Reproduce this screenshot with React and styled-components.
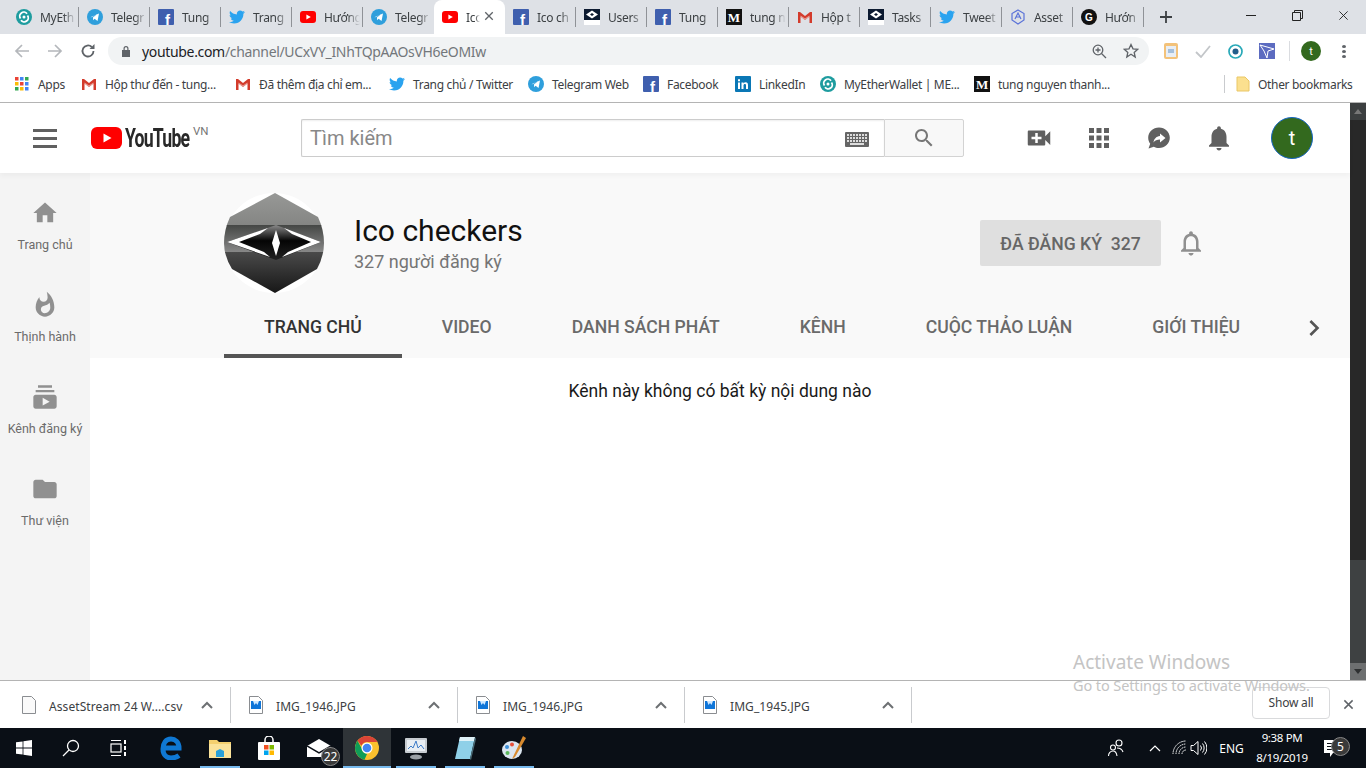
import React from 'react';
import styled, { createGlobalStyle } from 'styled-components';
import { FaTwitter } from 'react-icons/fa';

const GlobalStyle = createGlobalStyle`
  html, body {
    margin: 0;
    padding: 0;
    overflow: hidden;
    background: #fff;
  }
  * { box-sizing: border-box; }
`;

const Screen = styled.div`
  position: relative;
  width: 1366px;
  height: 768px;
  overflow: hidden;
  display: flex;
  flex-direction: column;
  font-family: Roboto, "Liberation Sans", sans-serif;
`;

/* chrome: tabs */
const TabStrip = styled.div`
  height: 34px;
  background: #dee1e6;
  display: flex;
  align-items: stretch;
  padding-left: 8px;
  flex: none;
`;

const Tab = styled.div`
  width: 71px;
  flex: none;
  display: flex;
  align-items: center;
  padding-left: 8px;
  gap: 8px;
  position: relative;
  background: ${(p) => (p.$active ? '#fff' : 'transparent')};
  border-radius: 8px 8px 0 0;
  &::after {
    content: '';
    display: ${(p) => (p.$sep ? 'block' : 'none')};
    position: absolute;
    right: 0;
    top: 7px;
    height: 20px;
    width: 1px;
    background: #8f9297;
  }
`;

const TabTitle = styled.span`
  font-family: "Noto Sans", sans-serif;
  font-size: 12px;
  letter-spacing: -0.3px;
  color: #3c4043;
  white-space: nowrap;
  width: ${(p) => (p.$active ? '14px' : '36px')};
  -webkit-mask-image: linear-gradient(90deg, #000 65%, transparent);
  mask-image: linear-gradient(90deg, #000 65%, transparent);
`;

const TabClose = styled.span`
  position: absolute;
  right: 9px;
  top: 11px;
  width: 12px;
  height: 12px;
  display: flex;
`;

const NewTab = styled.div`
  width: 30px;
  margin-left: 7px;
  display: flex;
  align-items: center;
  justify-content: center;
`;

const WindowControls = styled.div`
  margin-left: auto;
  display: flex;
  align-items: flex-start;
`;

const WinButton = styled.div`
  width: 46px;
  height: 30px;
  display: flex;
  align-items: center;
  justify-content: center;
`;

/* chrome: toolbar */
const Toolbar = styled.div`
  height: 34px;
  background: #fff;
  display: flex;
  align-items: center;
  padding: 0 0 0 12px;
  flex: none;
`;

const NavButton = styled.div`
  width: 20px;
  height: 20px;
  margin-right: 13px;
  display: flex;
  align-items: center;
  justify-content: center;
`;

const Omnibox = styled.div`
  width: 1041px;
  height: 28px;
  margin-left: -3px;
  border-radius: 14px;
  background: #f1f3f4;
  display: flex;
  align-items: center;
  padding: 0 2px 0 13px;
`;

const UrlText = styled.div`
  margin-left: 11px;
  font-family: "Noto Sans", sans-serif;
  font-size: 14px;
  letter-spacing: -0.33px;
  color: #73777b;
  flex: 1;
  white-space: nowrap;
  b {
    font-weight: 400;
    color: #202124;
  }
`;

const OmniAction = styled.div`
  width: 32px;
  display: flex;
  justify-content: center;
`;

const Extensions = styled.div`
  display: flex;
  align-items: center;
  margin-left: 6px;
  flex: 1;
`;

const ExtSlot = styled.div`
  width: 32px;
  display: flex;
  justify-content: center;
`;

const ExtDivider = styled.div`
  width: 1px;
  height: 20px;
  background: #dadce0;
  margin: 0 11px 0 6px;
`;

const ProfileDot = styled.div`
  width: 20px;
  height: 20px;
  border-radius: 50%;
  background: #33691e;
  color: #fff;
  font-size: 11px;
  display: flex;
  align-items: center;
  justify-content: center;
`;

const MoreDots = styled.div`
  margin-left: 21px;
  width: 4px;
  display: flex;
  flex-direction: column;
  gap: 2px;
  i {
    display: block;
    width: 4px;
    height: 3px;
    border-radius: 50%;
    background: #5f6368;
  }
`;

/* chrome: bookmarks */
const BookmarkBar = styled.div`
  height: 35px;
  background: #fff;
  border-bottom: 1px solid #b4b4b4;
  display: flex;
  align-items: center;
  padding: 0 0 2px 15px;
  flex: none;
`;

const Bookmark = styled.div`
  width: ${(p) => p.$w}px;
  flex: none;
  display: flex;
  align-items: center;
  gap: ${(p) => p.$gap || 8}px;
  font-family: "Noto Sans", sans-serif;
  font-size: 12px;
  letter-spacing: -0.32px;
  color: #3c4043;
  white-space: nowrap;
`;

const BookmarkDivider = styled.div`
  width: 1px;
  height: 18px;
  background: #c9cbce;
  margin: 0 10px 0 0;
`;

/* youtube page */
const Main = styled.div`
  flex: 1;
  display: flex;
  min-height: 0;
`;

const Page = styled.div`
  flex: 1;
  display: flex;
  flex-direction: column;
  min-width: 0;
`;

const YtHeader = styled.header`
  height: 70px;
  flex: none;
  background: #fff;
  display: flex;
  align-items: center;
  padding-left: 33px;
  position: relative;
  z-index: 2;
  box-shadow: 0 3px 5px rgba(0, 0, 0, 0.035);
`;

const Burger = styled.div`
  width: 24px;
  display: flex;
  flex-direction: column;
  gap: 5px;
  i {
    display: block;
    height: 3px;
    background: #606060;
  }
`;

const Logo = styled.div`
  margin-left: 34px;
  width: 210px;
  display: flex;
  align-items: center;
  position: relative;
`;

const Wordmark = styled.span`
  font-family: Roboto, sans-serif;
  font-weight: 700;
  font-size: 26px;
  letter-spacing: -1.2px;
  color: #282828;
  margin-left: 3px;
  display: inline-block;
  transform: scaleX(0.68);
  transform-origin: left center;
`;

const Country = styled.span`
  position: absolute;
  left: 102px;
  top: 1px;
  font-size: 11.5px;
  color: #767676;
`;

const SearchBox = styled.div`
  width: 583px;
  height: 38px;
  display: flex;
  align-items: center;
  background: #fff;
  border: 1px solid #ccc;
  border-right: none;
  border-radius: 2px 0 0 2px;
  padding: 2px 15px 0 8px;
  box-shadow: inset 0 1px 2px #eee;
`;

const SearchText = styled.span`
  flex: 1;
  margin-top: -2px;
  font-size: 20px;
  color: #888;
`;

const SearchButton = styled.div`
  width: 80px;
  height: 38px;
  background: #f8f8f8;
  border: 1px solid #d3d3d3;
  border-radius: 0 2px 2px 0;
  display: flex;
  align-items: center;
  justify-content: center;
`;

const HeaderIcons = styled.div`
  display: flex;
  align-items: center;
  gap: 30px;
  margin-left: 60px;
`;

const Avatar = styled.div`
  width: 42px;
  height: 42px;
  margin-left: 37px;
  border-radius: 50%;
  background: #33691e;
  border: 1px solid #1565c0;
  color: #fff;
  font-size: 20px;
  display: flex;
  align-items: center;
  justify-content: center;
`;

const Body = styled.div`
  flex: 1;
  display: flex;
  min-height: 0;
`;

const Sidebar = styled.nav`
  width: 90px;
  flex: none;
  background: #f4f4f4;
  padding-top: 26px;
`;

const SideItem = styled.div`
  height: 92px;
  display: flex;
  flex-direction: column;
  align-items: center;
  font-size: 12.5px;
  line-height: 16px;
  color: #6b6b6b;
  white-space: nowrap;
  span { margin-top: 10px; }
`;

const Content = styled.main`
  flex: 1;
  display: flex;
  flex-direction: column;
  background: #fff;
  min-width: 0;
`;

const ChannelHead = styled.section`
  background: #f9f9f9;
  height: 185px;
  flex: none;
  padding-left: 134px;
  display: flex;
  flex-direction: column;
`;

const ChannelRow = styled.div`
  height: 127px;
  display: flex;
  align-items: center;
  padding: 13px 144px 0 0;
`;

const ChannelInfo = styled.div`
  margin-left: 30px;
  margin-top: 2px;
  flex: 1;
`;

const ChannelName = styled.div`
  font-size: 30px;
  line-height: 36px;
  margin-top: -2px;
  color: #111;
`;

const ChannelSub = styled.div`
  font-size: 18px;
  line-height: 25px;
  color: #757575;
`;

const SubButton = styled.div`
  width: 181px;
  height: 46px;
  padding-top: 2px;
  background: #dfdfdf;
  border-radius: 2px;
  color: #666;
  font-size: 17.6px;
  font-weight: 500;
  display: flex;
  align-items: center;
  justify-content: center;
  white-space: pre;
`;

const BellSlot = styled.div`
  margin-left: 15px;
  display: flex;
`;

const ChannelTabs = styled.div`
  height: 58px;
  display: flex;
  padding-right: 20px;
`;

const ChannelTab = styled.div`
  padding: 0 40px 4px;
  display: flex;
  align-items: center;
  font-size: 17.6px;
  font-weight: 500;
  white-space: nowrap;
  color: ${(p) => (p.$active ? '#333' : '#6a6a6a')};
  box-shadow: ${(p) => (p.$active ? 'inset 0 -4px 0 #555' : 'none')};
`;

const TabsNext = styled.div`
  margin-left: auto;
  display: flex;
  align-items: center;
  padding-bottom: 3px;
`;

const EmptyNote = styled.div`
  text-align: center;
  margin-top: 22px;
  font-size: 17.5px;
  line-height: 22px;
  color: #1a1a1a;
`;

const Scrollbar = styled.div`
  width: 16px;
  flex: none;
  background: #3e4142;
  display: flex;
  flex-direction: column;
`;

const ScrollArrow = styled.div`
  height: 17px;
  background: ${(p) => (p.$down ? '#6d6f70' : '#3c3f40')};
  display: flex;
  align-items: center;
  justify-content: center;
  &::before {
    content: '';
    border-left: 4px solid transparent;
    border-right: 4px solid transparent;
    ${(p) => (p.$down ? 'border-top: 5px solid #2e3031;' : 'border-bottom: 5px solid #777;')}
  }
`;

const ScrollThumb = styled.div`
  height: 440px;
  background: #282828;
`;

const ScrollTrack = styled.div`
  flex: 1;
`;

/* chrome: download shelf */
const Shelf = styled.div`
  height: 48px;
  flex: none;
  background: #fff;
  border-top: 1px solid #b4b4b4;
  display: flex;
  align-items: center;
  padding-left: 4px;
`;

const Download = styled.div`
  width: 227px;
  height: 36px;
  flex: none;
  border-right: 1px solid #c9cbce;
  display: flex;
  align-items: center;
  padding-left: 18px;
  font-family: "Noto Sans", sans-serif;
  font-size: 12px;
  letter-spacing: 0.08px;
  color: #3c4043;
`;

const DownloadName = styled.span`
  margin-left: 13px;
  width: 152px;
  padding-top: 3px;
  white-space: nowrap;
`;

const ShowAll = styled.div`
  margin: -4px 0 0 auto;
  width: 78px;
  height: 32px;
  border: 1px solid #d9dadc;
  border-radius: 4px;
  font-family: "Noto Sans", sans-serif;
  font-size: 12px;
  letter-spacing: -0.2px;
  color: #3c4043;
  display: flex;
  align-items: center;
  justify-content: center;
`;

const ShelfClose = styled.div`
  width: 36px;
  display: flex;
  justify-content: center;
`;

/* windows taskbar */
const Taskbar = styled.footer`
  height: 40px;
  flex: none;
  background: #0a0f16;
  display: flex;
  align-items: stretch;
`;

const TaskIcon = styled.div`
  width: ${(p) => p.$w || 48}px;
  margin-right: ${(p) => p.$mr || 0}px;
  flex: none;
  position: relative;
  display: flex;
  align-items: center;
  justify-content: center;
  background: ${(p) => (p.$focus ? '#2f3438' : 'transparent')};
  box-shadow: ${(p) => (p.$open ? 'inset 0 -2px 0 #76b9ed' : 'none')};
`;

const TaskBadge = styled.span`
  position: absolute;
  right: ${(p) => p.$right}px;
  bottom: ${(p) => p.$bottom}px;
  width: 19px;
  height: 19px;
  border-radius: 50%;
  background: #3a3a3a;
  border: 1px solid #888;
  color: #fff;
  font-size: 12px;
  font-family: "Noto Sans", sans-serif;
  display: flex;
  align-items: center;
  justify-content: center;
`;

const Tray = styled.div`
  margin-left: auto;
  padding-right: 10px;
  display: flex;
  align-items: center;
  color: #fff;
  font-family: "Noto Sans", sans-serif;
  font-size: 12px;
`;

const TraySlot = styled.div`
  width: ${(p) => p.$w}px;
  display: flex;
  justify-content: center;
`;

const Clock = styled.div`
  width: 54px;
  display: flex;
  flex-direction: column;
  align-items: center;
  font-size: 11.5px;
  line-height: 20px;
  letter-spacing: -0.35px;
  white-space: nowrap;
`;

const ActivateNote = styled.div`
  position: absolute;
  left: 1073px;
  top: 650px;
  color: #c4c4c4;
  font-family: "Noto Sans", sans-serif;
  pointer-events: none;
  div:first-child {
    font-size: 19px;
    line-height: 24px;
  }
  div:last-child {
    font-size: 14.5px;
    letter-spacing: -0.1px;
    line-height: 20px;
    margin-top: 1px;
  }
`;

const Mew = ({ s = 16 }) => (
  <svg width={s} height={s} viewBox="0 0 16 16">
    <circle cx="8" cy="8" r="8" fill="#1e9c9f" />
    <path d="M4.5 9.5A4 4 0 0 1 11 4.8M11.5 6.5A4 4 0 0 1 5 11.2" fill="none" stroke="#fff" strokeWidth="1.8" />
    <circle cx="8" cy="8" r="1.5" fill="#fff" />
  </svg>
);

const Telegram = () => (
  <svg width="16" height="16" viewBox="0 0 24 24">
    <circle cx="12" cy="12" r="12" fill="#2f9fdc" />
    <path d="M5 12.2 18 6.8 15.8 18l-4.4-3.2-2 2-.5-4.2 6.4-5-7.6 4.4z" fill="#fff" />
  </svg>
);

const Facebook = () => (
  <svg width="16" height="16" viewBox="0 0 16 16">
    <rect width="16" height="16" rx="1" fill="#3f5fae" />
    <text x="7" y="16" fontFamily="Liberation Sans" fontWeight="700" fontSize="15" fill="#fff">f</text>
  </svg>
);

const Bird = () => <FaTwitter size={16} color="#2aa3ef" />;

const Youtube = () => (
  <svg width="16" height="16" viewBox="0 0 16 16">
    <rect y="2" width="16" height="12" rx="3" fill="#f00" />
    <path d="M6.4 5.4 10.8 8l-4.4 2.6z" fill="#fff" />
  </svg>
);

const Gmail = () => (
  <svg width="16" height="16" viewBox="0 0 16 16">
    <path d="M1 3h2l5 4 5-4h2v11h-2.5V7.5L8 11 3.5 7.5V14H1z" fill="#d33b2c" />
    <path d="M3.5 7.5 8 11l4.500-3.500V6.500L8 9.500 3.500 6.500z" fill="#e8a49c" />
  </svg>
);

const Tasks = () => (
  <svg width="16" height="16" viewBox="0 0 16 16">
    <rect width="16" height="11" fill="#0c1a30" />
    <rect y="11" width="16" height="5" fill="#fff" />
    <path d="M8 1.500 14 5.500 8 9.500 2 5.500z" fill="#fff" />
    <path d="M8 4 10 5.500 8 7 6 5.500z" fill="#0c1a30" />
  </svg>
);

const Medium = () => (
  <svg width="16" height="16" viewBox="0 0 16 16">
    <rect width="16" height="16" fill="#111" />
    <text x="8" y="12.500" textAnchor="middle" fontFamily="Liberation Serif" fontWeight="700" fontSize="13" fill="#fff">M</text>
  </svg>
);

const Asset = () => (
  <svg width="16" height="16" viewBox="0 0 16 16" fill="none" stroke="#5a72d8" strokeWidth="1.2">
    <path d="M8 1 14 4.500V11L8 15 2 11V4.500z" />
    <path d="M5 10 8 4l3 6M6 8h4" />
  </svg>
);

const Google = () => (
  <svg width="16" height="16" viewBox="0 0 16 16">
    <circle cx="8" cy="8" r="8" fill="#111" />
    <text x="8" y="11.500" textAnchor="middle" fontFamily="Liberation Sans" fontWeight="700" fontSize="10" fill="#fff">G</text>
  </svg>
);

const tabs = [
  [Mew, 'MyEth'],
  [Telegram, 'Telegr'],
  [Facebook, 'Tung'],
  [Bird, 'Trang'],
  [Youtube, 'Hướng'],
  [Telegram, 'Telegr'],
  [Youtube, 'Ico'],
  [Facebook, 'Ico ch'],
  [Tasks, 'Users'],
  [Facebook, 'Tung'],
  [Medium, 'tung n'],
  [Gmail, 'Hộp t'],
  [Tasks, 'Tasks'],
  [Bird, 'Tweet'],
  [Asset, 'Asset'],
  [Google, 'Hướn'],
];

const Apps = () => (
  <svg width="14" height="14" viewBox="0 0 14 14">
    {[0, 5, 10].map((y, r) =>
      [0, 5, 10].map((x, c) => (
        <rect
          key={`${r}${c}`}
          x={x}
          y={y}
          width="3.500"
          height="3.500"
          fill={['#ea4335', '#4285f4', '#34a853', '#fbbc05', '#ea4335', '#4285f4', '#34a853', '#fbbc05', '#4285f4'][r * 3 + c]}
        />
      ))
    )}
  </svg>
);

const LinkedIn = () => (
  <svg width="16" height="16" viewBox="0 0 16 16">
    <rect width="16" height="16" rx="1" fill="#0a77b5" />
    <path d="M3 6.500h2V13H3zM3 3.200h2v2H3zM6.500 6.500h2v1c.5-.8 1.200-1.200 2.200-1.200 1.600 0 2.300 1 2.300 2.800V13h-2V9.500c0-1-.3-1.500-1.100-1.500-.9 0-1.400.6-1.400 1.600V13h-2z" fill="#fff" />
  </svg>
);

const bookmarks = [
  [Apps, 'Apps', 66, 9],
  [Gmail, 'Hộp thư đến - tung...', 154],
  [Gmail, 'Đã thêm địa chỉ em...', 154],
  [Bird, 'Trang chủ / Twitter', 139],
  [Telegram, 'Telegram Web', 115],
  [Facebook, 'Facebook', 92],
  [LinkedIn, 'LinkedIn', 85],
  [Mew, 'MyEtherWallet | ME...', 154],
  [Medium, 'tung nguyen thanh...', 250],
];

const MaterialIcon = ({ d, size = 24, color = '#606060' }) => (
  <svg width={size} height={size} viewBox="0 0 24 24" fill={color}>
    <path d={d} />
  </svg>
);

const ICONS = {
  home: 'M10 20v-6h4v6h5v-8h3L12 3 2 12h3v8z',
  flame: 'M13.5.67s.74 2.65.74 4.8c0 2.06-1.35 3.73-3.41 3.73-2.07 0-3.63-1.67-3.63-3.73l.03-.36C5.21 7.51 4 10.62 4 14c0 4.42 3.58 8 8 8s8-3.58 8-8C20 8.61 17.41 3.8 13.5.67zM11.71 19c-1.78 0-3.22-1.4-3.22-3.14 0-1.62 1.05-2.76 2.81-3.12 1.77-.36 3.6-1.21 4.62-2.58.39 1.29.59 2.65.59 4.04 0 2.65-2.15 4.8-4.8 4.8z',
  subs: 'M20 8H4V6h16v2zm-2-6H6v2h12V2zm4 10v8c0 1.1-.9 2-2 2H4c-1.1 0-2-.9-2-2v-8c0-1.1.9-2 2-2h16c1.1 0 2 .9 2 2zm-6 4l-6-3.27v6.53L16 16z',
  folder: 'M10 4H4c-1.1 0-1.99.9-1.99 2L2 18c0 1.1.9 2 2 2h16c1.1 0 2-.9 2-2V8c0-1.1-.9-2-2-2h-8l-2-2z',
  video: 'M17 10.500V7c0-.55-.45-1-1-1H4c-.55 0-1 .45-1 1v10c0 .55.45 1 1 1h12c.55 0 1-.45 1-1v-3.500l4 4v-11l-4 4zM14 13h-3v3H9v-3H6v-2h3V8h2v3h3v2z',
  apps: 'M4 8h4V4H4v4zm6 12h4v-4h-4v4zm-6 0h4v-4H4v4zm0-6h4v-4H4v4zm6 0h4v-4h-4v4zm6-10v4h4V4h-4zm-6 4h4V4h-4v4zm6 6h4v-4h-4v4zm0 6h4v-4h-4v4z',
  bell: 'M12 22c1.100 0 2-.9 2-2h-4c0 1.100.89 2 2 2zm6-6v-5c0-3.070-1.640-5.640-4.500-6.320V4c0-.83-.67-1.500-1.500-1.500s-1.500.67-1.500 1.500v.68C7.630 5.360 6 7.920 6 11v5l-2 2v1h16v-1l-2-2z',
  bellOutline: 'M12 22c1.100 0 2-.9 2-2h-4c0 1.100.9 2 2 2zm6-6v-5c0-3.070-1.630-5.640-4.500-6.320V4c0-.83-.67-1.500-1.500-1.500s-1.500.67-1.500 1.500v.68C7.640 5.360 6 7.920 6 11v5l-2 2v1h16v-1l-2-2zm-2 1H8v-6c0-2.480 1.510-4.500 4-4.500s4 2.020 4 4.500v6z',
  search: 'M15.500 14h-.79l-.28-.27C15.410 12.590 16 11.110 16 9.500 16 5.910 13.090 3 9.500 3S3 5.910 3 9.500 5.910 16 9.500 16c1.610 0 3.090-.59 4.230-1.570l.27.28v.79l5 4.990L20.490 19l-4.990-5zm-6 0C7.010 14 5 11.990 5 9.500S7.010 5 9.500 5 14 7.010 14 9.500 11.990 14 9.500 14z',
  chevron: 'M10 6 8.590 7.410 13.170 12l-4.580 4.590L10 18l6-6z',
};

const ShareSlot = styled.div`
  width: 30px;
  display: flex;
  justify-content: center;
`;

const ShareIcon = () => (
  <ShareSlot>
    <svg width="24" height="24" viewBox="0 0 24 24">
      <path d="M12 1.500c6 0 10.800 4.500 10.800 10.300S18 22 12 22c-2 0-3.700-.4-5.200-1.300L1.500 22.500l1.700-4.700C2 16.200 1.200 14.100 1.200 11.800 1.200 6 6 1.500 12 1.500z" fill="#606060" />
      <path d="M13 7.500 18.500 12 13 16.500v-3c-3 0-5 .8-6.500 3 .5-3.500 2.500-6 6.500-6.500z" fill="#fff" />
    </svg>
  </ShareSlot>
);

const KeyboardIcon = () => (
  <svg width="24" height="15" viewBox="0 0 24 15">
    <rect width="24" height="15" rx="1" fill="#666" />
    {[2, 5, 8].map((y) =>
      [2, 5, 8, 11, 14, 17, 20].map((x) => <rect key={`${x}-${y}`} x={x} y={y} width="2" height="2" fill="#ddd" />)
    )}
    <rect x="5" y="11" width="14" height="2" fill="#ddd" />
  </svg>
);

const ChannelArt = () => (
  <svg width="100" height="102" viewBox="0 0 100 102">
    <defs>
      <linearGradient id="art-top" x1="0" y1="0" x2="0" y2="1">
        <stop offset="0" stopColor="#989997" />
        <stop offset="1" stopColor="#848583" />
      </linearGradient>
      <linearGradient id="art-mid" x1="0" y1="0" x2="0" y2="1">
        <stop offset="0" stopColor="#454745" />
        <stop offset="1" stopColor="#8a8a8a" />
      </linearGradient>
      <linearGradient id="art-low" x1="0" y1="0" x2="0" y2="1">
        <stop offset="0" stopColor="#4a4a4a" />
        <stop offset="1" stopColor="#161616" />
      </linearGradient>
      <linearGradient id="art-star" x1="0" y1="0" x2="0" y2="1">
        <stop offset="0" stopColor="#8a8a8a" />
        <stop offset="0.45" stopColor="#050505" />
        <stop offset="1" stopColor="#222" />
      </linearGradient>
      <clipPath id="art-hex">
        <path d="M51 1 94 25Q100 38 100 51T93 77L51 101 8 77Q0 64 0 51T6 25z" />
      </clipPath>
    </defs>
    <circle cx="50" cy="51" r="50" fill="#fff" />
    <g clipPath="url(#art-hex)">
      <rect width="100" height="34" fill="url(#art-top)" />
      <rect y="33" width="100" height="28" fill="url(#art-mid)" />
      <rect y="60" width="100" height="42" fill="url(#art-low)" />
    </g>
    <path d="M3 50 52 33 97 50 52 68z" fill="url(#art-star)" />
    <path d="M3 50 44 36 36 42 15 50z" fill="#fff" />
    <path d="M3 50H15L40 60 46 65z" fill="#fff" />
    <path d="M97 50 60 36 68 42 87 50z" fill="#fff" />
    <path d="M97 50H87L64 60 58 65z" fill="#fff" />
    <path d="M52 38 56 51 52 64 48 51z" fill="#fff" />
  </svg>
);

const DocIcon = ({ image }) => (
  <svg width="14" height="18" viewBox="0 0 14 18" fill={image ? '#fff' : '#fafafa'} stroke="#8a8d91">
    <path d="M.5.500h9l4 4v13H.500z" />
    {image && <rect x="2" y="5" width="10" height="8" fill="#0f75d8" stroke="none" />}
    {image && <path d="M4 5h6L8.500 9 7 7 5.500 9z" fill="#cfe8ff" stroke="none" />}
  </svg>
);

const Caret = () => (
  <svg width="12" height="8" viewBox="0 0 12 8" fill="none" stroke="#6d7073" strokeWidth="2">
    <path d="M1 7l5-5 5 5" />
  </svg>
);

const Cross = ({ size = 12, color = '#5f6368', width = 1.600 }) => (
  <svg width={size} height={size} viewBox="0 0 12 12" stroke={color} strokeWidth={width}>
    <path d="M1.500 1.500l9 9M10.500 1.500l-9 9" />
  </svg>
);

const downloads = [
  ['AssetStream 24 W....csv', false],
  ['IMG_1946.JPG', true],
  ['IMG_1946.JPG', true],
  ['IMG_1945.JPG', true],
];

const Windows = () => (
  <svg width="16" height="16" viewBox="0 0 16 16" fill="#fff">
    <path d="M0 2.300 6.600 1.400V7.600H0zM7.400 1.300 16 0v7.600H7.400zM0 8.400H6.600V14.600L0 13.700zM7.400 8.400H16V16L7.400 14.700z" />
  </svg>
);

const Magnifier = () => (
  <svg width="18" height="18" viewBox="0 0 18 18" fill="none" stroke="#fff" strokeWidth="1.300">
    <circle cx="11" cy="7" r="5.500" />
    <path d="M7 11 1 17" />
  </svg>
);

const TaskView = () => (
  <svg width="18" height="18" viewBox="0 0 18 18" fill="none" stroke="#fff" strokeWidth="1.200">
    <path d="M1 1.500h10M1 16.500h10" />
    <rect x="1" y="5" width="10" height="8" />
    <path d="M15 1v4M15 7v4M15 13v4" strokeWidth="2" />
  </svg>
);

const Edge = () => (
  <svg width="22" height="24" viewBox="0 0 22 24" fill="none" stroke="#0f78d4" strokeWidth="5">
    <path d="M3 12h16C19 6 15 3 11 3 6 3 3 7 3 13c0 6 4 9 8 9 3 0 6-1 8-2.500" />
  </svg>
);

const Explorer = () => (
  <svg width="22" height="20" viewBox="0 0 22 20">
    <path d="M0 2h8l2 2h12v16H0z" fill="#f4d06f" />
    <rect y="6" width="22" height="14" fill="#fbe39a" />
    <path d="M7 19v-6l4-2 4 2v6z" fill="#2aa0d8" />
  </svg>
);

const Store = () => (
  <svg width="22" height="24" viewBox="0 0 22 24">
    <path d="M7 7V4a4 4 0 0 1 8 0v3" fill="none" stroke="#fff" strokeWidth="1.500" />
    <rect y="6" width="22" height="18" rx="1" fill="#fff" />
    <rect x="6" y="9" width="4.500" height="4.500" fill="#f25022" />
    <rect x="11.500" y="9" width="4.500" height="4.500" fill="#7fba00" />
    <rect x="6" y="14.500" width="4.500" height="4.500" fill="#00a4ef" />
    <rect x="11.500" y="14.500" width="4.500" height="4.500" fill="#ffb900" />
  </svg>
);

const Mail = () => (
  <svg width="24" height="18" viewBox="0 0 24 18">
    <path d="M0 7 12 0l12 7v11H0z" fill="#fff" />
    <path d="M0 7l12 7 12-7" fill="none" stroke="#0a0f16" strokeWidth="1.500" />
  </svg>
);

const Chrome = () => (
  <svg width="24" height="24" viewBox="0 0 24 24">
    <circle cx="12" cy="12" r="12" fill="#fbc02d" />
    <path d="M12 0a12 12 0 0 1 10.400 6H12a6 6 0 0 0-5.600 3.800L2.500 4.700A12 12 0 0 1 12 0z" fill="#db4437" />
    <path d="M2.500 4.700 7 13a6 6 0 0 0 5 4.900L9.500 23.700A12 12 0 0 1 2.500 4.700z" fill="#0f9d58" />
    <circle cx="12" cy="12" r="5.500" fill="#fff" />
    <circle cx="12" cy="12" r="4.300" fill="#4285f4" />
  </svg>
);

const Monitor = () => (
  <svg width="24" height="24" viewBox="0 0 24 24">
    <rect x="1" y="2" width="22" height="15" rx="1" fill="#c7ccd1" />
    <rect x="3" y="4" width="18" height="11" fill="#e9eef3" />
    <path d="M4 13 7 10 9 12 12 5 14 12 17 9 20 13" fill="none" stroke="#3d7cc9" />
    <ellipse cx="12" cy="21" rx="6" ry="2.500" fill="#9aa0a6" />
  </svg>
);

const Notepad = () => (
  <svg width="22" height="24" viewBox="0 0 22 24">
    <path d="M6 1h15L16 23H1z" fill="#8fd0e8" />
    <path d="M6 1h15l-1 4H5z" fill="#dff2f8" />
    <path d="M16 23l5-22 1 2-5 21z" fill="#4c6d78" />
  </svg>
);

const Paint = () => (
  <svg width="26" height="26" viewBox="0 0 26 26">
    <ellipse cx="11" cy="15" rx="10" ry="9" fill="#dce6f0" />
    <circle cx="6" cy="12" r="2" fill="#3d8fd8" />
    <circle cx="11" cy="9.500" r="2" fill="#e8503a" />
    <circle cx="6.500" cy="18" r="2" fill="#5cb85c" />
    <path d="M22 1 25 3 14 22 11 24z" fill="#d88a2e" />
  </svg>
);

const Person = () => (
  <svg width="18" height="18" viewBox="0 0 18 18" fill="none" stroke="#fff" strokeWidth="1.100">
    <circle cx="12" cy="4" r="3" />
    <circle cx="6" cy="8.500" r="2.500" />
    <path d="M1.500 17c0-3 2-5 4.500-5s3.500 1.500 4 5M10 9c3 0 5 1 6 4" />
  </svg>
);

const Wifi = () => (
  <svg width="16" height="16" viewBox="0 0 16 16" fill="none" stroke="#fff" strokeWidth="1" strokeDasharray="1.500 .7">
    <path d="M1 14A13 13 0 0 1 14 1M4 14A10 10 0 0 1 14 4M7 14a7 7 0 0 1 7-7M10 14a4 4 0 0 1 4-4" />
  </svg>
);

const Speaker = () => (
  <svg width="17" height="16" viewBox="0 0 17 16" fill="none" stroke="#fff" strokeWidth="1">
    <path d="M1 5.500h2.500L8 1.500v13l-4.500-4H1z" />
    <path d="M10.500 5.500a4 4 0 0 1 0 5M12.500 3.500a7 7 0 0 1 0 9M14.500 1.500a10 10 0 0 1 0 13" />
  </svg>
);

const Notice = () => (
  <svg width="18" height="17" viewBox="0 0 18 17" fill="#fff">
    <path d="M0 0h18v13H9l-3 4v-4H0z" />
    <path d="M3 3.500h12M3 6.500h12M3 9.500h9" stroke="#0a0f16" strokeWidth="1" />
  </svg>
);

const sideItems = [
  [ICONS.home, 'Trang chủ'],
  [ICONS.flame, 'Thịnh hành'],
  [ICONS.subs, 'Kênh đăng ký'],
  [ICONS.folder, 'Thư viện'],
];

const channelTabs = ['TRANG CHỦ', 'VIDEO', 'DANH SÁCH PHÁT', 'KÊNH', 'CUỘC THẢO LUẬN', 'GIỚI THIỆU'];

export default function App() {
  return (
    <Screen>
      <GlobalStyle />
      <TabStrip>
        {tabs.map(([Icon, title], idx) => (
          <Tab key={idx} $active={idx === 6} $sep={idx !== 5 && idx !== 6}>
            <Icon />
            <TabTitle $active={idx === 6}>{title}</TabTitle>
            {idx === 6 && (
              <TabClose>
                <Cross size={10} />
              </TabClose>
            )}
          </Tab>
        ))}
        <NewTab>
          <svg width="12" height="12" viewBox="0 0 12 12" stroke="#3c4043" strokeWidth="1.800">
            <path d="M6 0v12M0 6h12" />
          </svg>
        </NewTab>
        <WindowControls>
          <WinButton>
            <svg width="10" height="10" viewBox="0 0 10 10" stroke="#222">
              <path d="M0 5.500h10" />
            </svg>
          </WinButton>
          <WinButton>
            <svg width="11" height="11" viewBox="0 0 11 11" fill="none" stroke="#222">
              <path d="M.5 2.500h8v8h-8zM2.500 2.500v-2h8v8h-2" />
            </svg>
          </WinButton>
          <WinButton>
            <Cross size={11} color="#222" width={1} />
          </WinButton>
        </WindowControls>
      </TabStrip>

      <Toolbar>
        <NavButton>
          <svg width="16" height="16" viewBox="0 0 16 16" fill="none" stroke="#b4b7bb" strokeWidth="1.700">
            <path d="M15 8H2M8 2 2 8l6 6" />
          </svg>
        </NavButton>
        <NavButton>
          <svg width="16" height="16" viewBox="0 0 16 16" fill="none" stroke="#b4b7bb" strokeWidth="1.700">
            <path d="M1 8h13M8 2l6 6-6 6" />
          </svg>
        </NavButton>
        <NavButton>
          <svg width="16" height="16" viewBox="0 0 16 16" fill="none" stroke="#5f6368" strokeWidth="1.800">
            <path d="M13.500 8A5.500 5.500 0 1 1 11.800 4" />
            <path d="M14.500 1v5h-5z" fill="#5f6368" stroke="none" />
          </svg>
        </NavButton>
        <Omnibox>
          <svg width="10" height="12" viewBox="0 0 10 12" fill="#5f6368">
            <path d="M1 5h8v7H1zM2.500 5V3.500a2.500 2.500 0 0 1 5 0V5H6.300V3.500a1.300 1.300 0 0 0-2.600 0V5z" />
          </svg>
          <UrlText>
            <b>youtube.com</b>/channel/UCxVY_INhTQpAAOsVH6eOMIw
          </UrlText>
          <OmniAction>
            <svg width="15" height="15" viewBox="0 0 15 15" fill="none" stroke="#5f6368" strokeWidth="1.300">
              <circle cx="6" cy="6" r="4.800" />
              <path d="M9.500 9.500 14 14M6 3.500v5M3.500 6h5" />
            </svg>
          </OmniAction>
          <OmniAction>
            <svg width="16" height="16" viewBox="0 0 16 16" fill="none" stroke="#5f6368" strokeWidth="1.300">
              <path d="M8 1.500l2 4.300 4.700.5-3.500 3.100 1 4.600L8 11.200l-4.200 2.800 1-4.600L1.300 6.300 6 5.800z" />
            </svg>
          </OmniAction>
        </Omnibox>
        <Extensions>
          <ExtSlot>
            <svg width="14" height="16" viewBox="0 0 14 16">
              <rect width="14" height="16" rx="2" fill="#f3c27a" />
              <rect x="2" y="3" width="10" height="11" fill="#e8eef5" />
              <rect x="4" y="6" width="6" height="4" fill="#a4bfdc" />
            </svg>
          </ExtSlot>
          <ExtSlot>
            <svg width="16" height="13" viewBox="0 0 16 13" fill="none" stroke="#c3c6c9" strokeWidth="1.800">
              <path d="M1 7l5 5L15 1" />
            </svg>
          </ExtSlot>
          <ExtSlot>
            <svg width="15" height="15" viewBox="0 0 15 15">
              <circle cx="7.500" cy="7.500" r="6.500" fill="none" stroke="#29a9b8" strokeWidth="1.700" />
              <circle cx="7.500" cy="7.500" r="3" fill="#235e8a" />
            </svg>
          </ExtSlot>
          <ExtSlot>
            <svg width="16" height="16" viewBox="0 0 16 16">
              <rect width="16" height="16" fill="#5c6bc0" />
              <path d="M1 2 15 6 9 8 8 15 5 8z" fill="none" stroke="#fff" />
            </svg>
          </ExtSlot>
          <ExtDivider />
          <ProfileDot>t</ProfileDot>
          <MoreDots>
            <i />
            <i />
            <i />
          </MoreDots>
        </Extensions>
      </Toolbar>

      <BookmarkBar>
        {bookmarks.map(([Icon, label, w, gap]) => (
          <Bookmark key={label} $w={w} $gap={gap}>
            <Icon />
            {label}
          </Bookmark>
        ))}
        <BookmarkDivider />
        <Bookmark $w={130} $gap={7}>
          <svg width="16" height="16" viewBox="0 0 16 16">
            <path d="M2 1h8l4 4v10H2z" fill="#fbe08f" stroke="#eac767" />
          </svg>
          Other bookmarks
        </Bookmark>
      </BookmarkBar>

      <Main>
        <Page>
          <YtHeader>
            <Burger>
              <i />
              <i />
              <i />
            </Burger>
            <Logo>
              <svg width="31" height="22" viewBox="0 0 31 22">
                <rect width="31" height="22" rx="6" fill="#f00" />
                <path d="M12.500 6.500 20.500 11l-8 4.500z" fill="#fff" />
              </svg>
              <Wordmark>YouTube</Wordmark>
              <Country>VN</Country>
            </Logo>
            <SearchBox>
              <SearchText>Tìm kiếm</SearchText>
              <KeyboardIcon />
            </SearchBox>
            <SearchButton>
              <MaterialIcon d={ICONS.search} color="#777" />
            </SearchButton>
            <HeaderIcons>
              <MaterialIcon d={ICONS.video} size={30} />
              <MaterialIcon d={ICONS.apps} size={30} />
              <ShareIcon />
              <MaterialIcon d={ICONS.bell} size={30} />
            </HeaderIcons>
            <Avatar>t</Avatar>
          </YtHeader>

          <Body>
            <Sidebar>
              {sideItems.map(([d, label]) => (
                <SideItem key={label}>
                  <MaterialIcon d={d} size={28} color="#909090" />
                  <span>{label}</span>
                </SideItem>
              ))}
            </Sidebar>
            <Content>
              <ChannelHead>
                <ChannelRow>
                  <ChannelArt />
                  <ChannelInfo>
                    <ChannelName>Ico checkers</ChannelName>
                    <ChannelSub>327 người đăng ký</ChannelSub>
                  </ChannelInfo>
                  <SubButton>ĐÃ ĐĂNG KÝ  327</SubButton>
                  <BellSlot>
                    <MaterialIcon d={ICONS.bellOutline} size={30} color="#909090" />
                  </BellSlot>
                </ChannelRow>
                <ChannelTabs>
                  {channelTabs.map((label, idx) => (
                    <ChannelTab key={label} $active={idx === 0}>
                      {label}
                    </ChannelTab>
                  ))}
                  <TabsNext>
                    <MaterialIcon d={ICONS.chevron} size={32} color="#555" />
                  </TabsNext>
                </ChannelTabs>
              </ChannelHead>
              <EmptyNote>Kênh này không có bất kỳ nội dung nào</EmptyNote>
            </Content>
          </Body>
        </Page>
        <Scrollbar>
          <ScrollArrow />
          <ScrollThumb />
          <ScrollTrack />
          <ScrollArrow $down />
        </Scrollbar>
      </Main>

      <Shelf>
        {downloads.map(([name, image], idx) => (
          <Download key={idx}>
            <DocIcon image={image} />
            <DownloadName>{name}</DownloadName>
            <Caret />
          </Download>
        ))}
        <ShowAll>Show all</ShowAll>
        <ShelfClose>
          <Cross size={11} />
        </ShelfClose>
      </Shelf>

      <Taskbar>
        <TaskIcon $w={47}>
          <Windows />
        </TaskIcon>
        <TaskIcon>
          <Magnifier />
        </TaskIcon>
        <TaskIcon $w={47}>
          <TaskView />
        </TaskIcon>
        <TaskIcon $w={58}>
          <Edge />
        </TaskIcon>
        <TaskIcon $w={40} $mr={9} $open>
          <Explorer />
        </TaskIcon>
        <TaskIcon $w={40} $mr={10}>
          <Store />
        </TaskIcon>
        <TaskIcon $w={40} $mr={4}>
          <Mail />
          <TaskBadge $right={-1} $bottom={2}>22</TaskBadge>
        </TaskIcon>
        <TaskIcon $focus $open $mr={5}>
          <Chrome />
        </TaskIcon>
        <TaskIcon $w={40} $mr={9} $open>
          <Monitor />
        </TaskIcon>
        <TaskIcon $w={40} $mr={9} $open>
          <Notepad />
        </TaskIcon>
        <TaskIcon $w={40} $open>
          <Paint />
        </TaskIcon>
        <Tray>
          <TraySlot $w={47}>
            <Person />
          </TraySlot>
          <TraySlot $w={31}>
            <svg width="12" height="8" viewBox="0 0 12 8" fill="none" stroke="#fff" strokeWidth="1.200">
              <path d="M1 7l5-5 5 5" />
            </svg>
          </TraySlot>
          <TraySlot $w={19}>
            <Wifi />
          </TraySlot>
          <TraySlot $w={19}>
            <Speaker />
          </TraySlot>
          <TraySlot $w={47}>ENG</TraySlot>
          <Clock>
            <span>9:38 PM</span>
            <span>8/19/2019</span>
          </Clock>
          <TaskIcon $w={47}>
            <Notice />
            <TaskBadge $right={6} $bottom={1}>5</TaskBadge>
          </TaskIcon>
        </Tray>
      </Taskbar>

      <ActivateNote>
        <div>Activate Windows</div>
        <div>Go to Settings to activate Windows.</div>
      </ActivateNote>
    </Screen>
  );
}
